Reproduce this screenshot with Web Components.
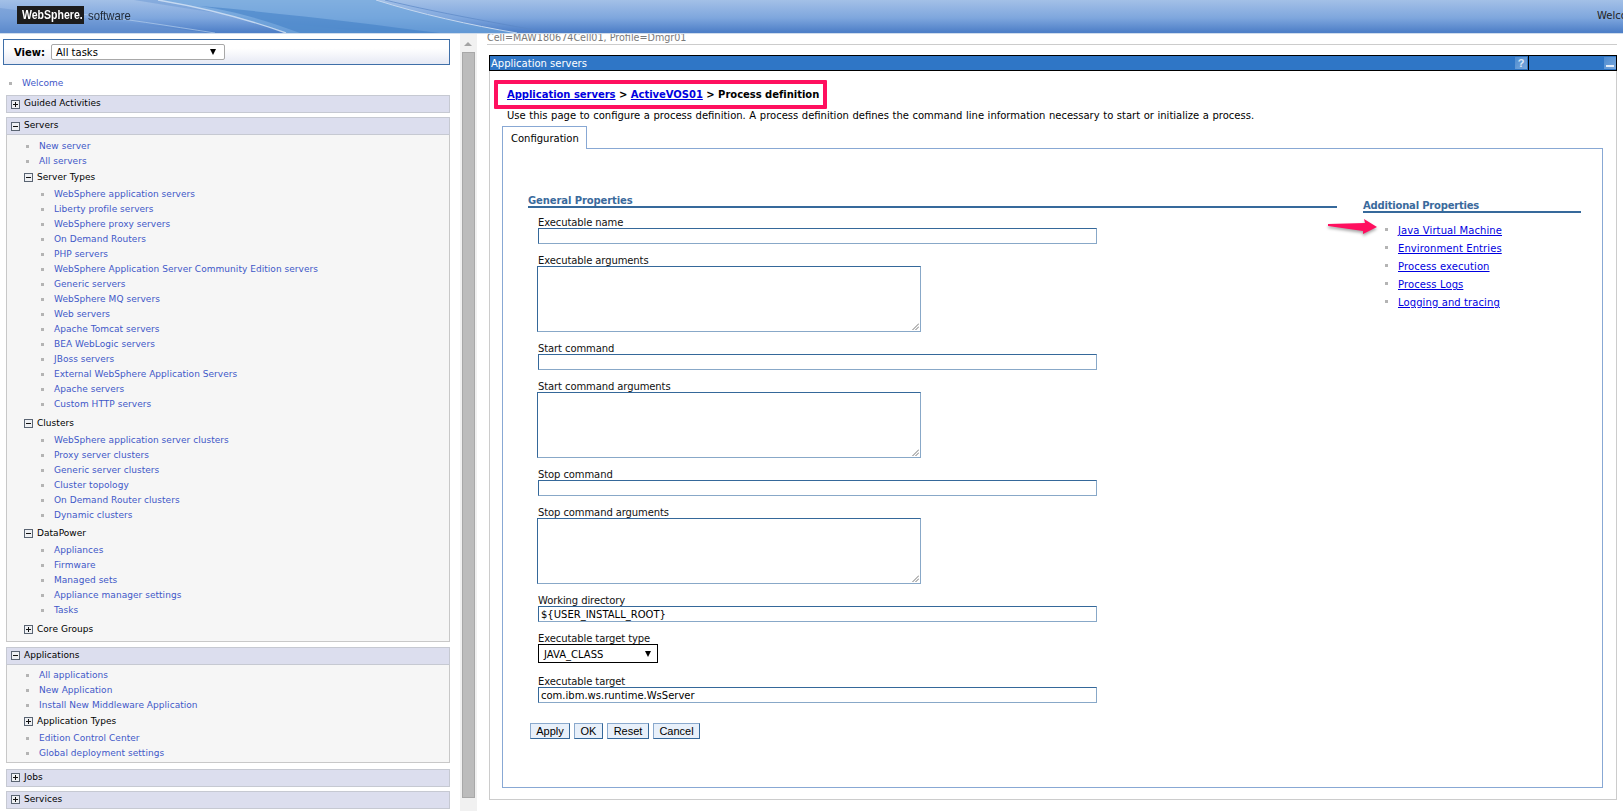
<!DOCTYPE html>
<html>
<head>
<meta charset="utf-8">
<title>WebSphere</title>
<style>
  html, body { margin: 0; height: 100%; overflow: hidden; background: #fff; }
  body { font: 10px "DejaVu Sans", sans-serif; color: #000; }
</style>
</head>
<body>
<was-console>
  <was-header slot="header"></was-header>
  <was-nav slot="nav">
    <nav-link level="0" style="margin-bottom:4px">Welcome</nav-link>
    <nav-section title="Guided Activities"></nav-section>
    <nav-section title="Servers" open pad="4" end="2" gap="5">
      <nav-link>New server</nav-link>
      <nav-link>All servers</nav-link>
      <nav-group title="Server Types" open>
        <nav-link level="2">WebSphere application servers</nav-link>
        <nav-link level="2">Liberty profile servers</nav-link>
        <nav-link level="2">WebSphere proxy servers</nav-link>
        <nav-link level="2">On Demand Routers</nav-link>
        <nav-link level="2">PHP servers</nav-link>
        <nav-link level="2">WebSphere Application Server Community Edition servers</nav-link>
        <nav-link level="2">Generic servers</nav-link>
        <nav-link level="2">WebSphere MQ servers</nav-link>
        <nav-link level="2">Web servers</nav-link>
        <nav-link level="2">Apache Tomcat servers</nav-link>
        <nav-link level="2">BEA WebLogic servers</nav-link>
        <nav-link level="2">JBoss servers</nav-link>
        <nav-link level="2">External WebSphere Application Servers</nav-link>
        <nav-link level="2">Apache servers</nav-link>
        <nav-link level="2">Custom HTTP servers</nav-link>
      </nav-group>
      <nav-group title="Clusters" open>
        <nav-link level="2">WebSphere application server clusters</nav-link>
        <nav-link level="2">Proxy server clusters</nav-link>
        <nav-link level="2">Generic server clusters</nav-link>
        <nav-link level="2">Cluster topology</nav-link>
        <nav-link level="2">On Demand Router clusters</nav-link>
        <nav-link level="2">Dynamic clusters</nav-link>
      </nav-group>
      <nav-group title="DataPower" open>
        <nav-link level="2">Appliances</nav-link>
        <nav-link level="2">Firmware</nav-link>
        <nav-link level="2">Managed sets</nav-link>
        <nav-link level="2">Appliance manager settings</nav-link>
        <nav-link level="2">Tasks</nav-link>
      </nav-group>
      <nav-group title="Core Groups"></nav-group>
    </nav-section>
    <nav-section title="Applications" open pad="3" end="1" gap="6">
      <nav-link>All applications</nav-link>
      <nav-link>New Application</nav-link>
      <nav-link>Install New Middleware Application</nav-link>
      <nav-group title="Application Types"></nav-group>
      <nav-link>Edition Control Center</nav-link>
      <nav-link>Global deployment settings</nav-link>
    </nav-section>
    <nav-section title="Jobs"></nav-section>
    <nav-section title="Services"></nav-section>
  </was-nav>
  <was-scrollbar slot="scroll"></was-scrollbar>
  <was-content slot="content">
    <was-portlet title="Application servers">
      <was-breadcrumb>
        <a>Application servers</a> &gt; <a>ActiveVOS01</a> &gt; Process definition
      </was-breadcrumb>
      <was-description>Use this page to configure a process definition. A process definition defines the command line information necessary to start or initialize a process.</was-description>
      <was-tabs tab="Configuration">
        <was-form-col title="General Properties">
          <form-field label="Executable name" type="text"></form-field>
          <form-field label="Executable arguments" type="area"></form-field>
          <form-field label="Start command" type="text"></form-field>
          <form-field label="Start command arguments" type="area"></form-field>
          <form-field label="Stop command" type="text"></form-field>
          <form-field label="Stop command arguments" type="area"></form-field>
          <form-field label="Working directory" type="text" value="${USER_INSTALL_ROOT}"></form-field>
          <form-field label="Executable target type" type="select" value="JAVA_CLASS"></form-field>
          <form-field label="Executable target" type="text" value="com.ibm.ws.runtime.WsServer"></form-field>
          <form-buttons>
            <button-x w="40">Apply</button-x><button-x w="29">OK</button-x><button-x w="42">Reset</button-x><button-x w="47">Cancel</button-x>
          </form-buttons>
        </was-form-col>
        <was-props slot="side" title="Additional Properties">
          <prop-link>Java Virtual Machine</prop-link>
          <prop-link>Environment Entries</prop-link>
          <prop-link>Process execution</prop-link>
          <prop-link>Process Logs</prop-link>
          <prop-link>Logging and tracing</prop-link>
        </was-props>
      </was-tabs>
    </was-portlet>
  </was-content>
</was-console>

<script>
function define(name, css, html) {
  customElements.define(name, class extends HTMLElement {
    constructor() {
      super();
      this.attachShadow({ mode: "open" });
    }
    connectedCallback() {
      const get = (k, d = "") => this.getAttribute(k) ?? d;
      const body = typeof html === "function" ? html(get, this) : html;
      this.shadowRoot.innerHTML = `<style>${css}</style>${body}`;
    }
  });
}

const toggle = (open) => /*html*/ `
  <svg width="9" height="9" viewBox="0 0 9 9" style="flex:none;display:block">
    <rect x="0.5" y="0.5" width="8" height="8" fill="#eef0f3" stroke="#5a6472"/>
    <path d="M2 4.5h5${open ? "" : "M4.5 2v5"}" stroke="#111" fill="none"/>
  </svg>`;

define("was-console", `
  :host { display: grid; grid-template-columns: 460px 17px 1fr; grid-template-rows: 33px 1fr; height: 811px; overflow: hidden; }
  .h { grid-column: 1 / 4; display: block; position: relative; z-index: 2; }
`, `<div class="h"><slot name="header"></slot></div><slot name="nav"></slot><slot name="scroll"></slot><slot name="content"></slot>`);

define("was-header", `
  :host { display: block; height: 34px; box-sizing: border-box; position: relative; overflow: hidden;
    background: linear-gradient(#a3c0e7, #7ea6dd 55%, #4f80c8 96%); border-bottom: 1px solid #cfdcec; }
  svg { position: absolute; left: 0; top: 0; }
  .bar { position: relative; display: flex; align-items: center; height: 30px; padding-left: 17px; }
  .logo { background: #1c1c1c; height: 18px; width: 67px; box-sizing: border-box; padding-left: 5px; overflow: hidden; flex: none; }
  .logo span { display: inline-block; color: #fff; font: bold 13px/18px "Liberation Sans", sans-serif; white-space: nowrap; transform: scaleX(.81); transform-origin: left; }
  .soft { display: inline-block; font: 13px "Liberation Sans", sans-serif; color: #222c3a; margin-left: 4px; width: 44px; white-space: nowrap; transform: scaleX(.87); transform-origin: left; }
  .welcome { margin-left: auto; color: #222; font-size: 10px; width: 26px; overflow: hidden; white-space: nowrap; }
`, /*html*/ `
  <svg width="1623" height="33" viewBox="0 0 1623 33" fill="none">
    <path d="M0 8C60 16 140 24 210 33H0Z" fill="#6b95d2" opacity=".5"/>
    <path d="M134 0C220 14 300 26 380 33H286C250 20 205 8 158 0Z" fill="#6f9ad6" opacity=".55"/>
    <path d="M158 0H376C420 14 470 25 517 33H286C250 20 205 8 158 0Z" fill="#6fa6db" opacity=".65"/>
    <path d="M200 6C290 14 370 24 440 33H300C270 22 240 12 200 6Z" fill="#3f7dc4" opacity=".55"/>
    <path d="M158 0C205 8 250 20 286 33" stroke="#d2e2f5" stroke-width="1.4" opacity=".85"/>
    <path d="M376 0C420 14 470 25 517 33" stroke="#c6d8ef" stroke-width="1"/>
    <path d="M385 0C430 11 480 20 540 31" stroke="#5b88c6" stroke-width="1" opacity=".7"/>
    <path d="M80 14C120 18 170 26 215 33" stroke="#b4cdeb" stroke-width="1" opacity=".7"/>
  </svg>
  <div class="bar">
    <span class="logo"><span>WebSphere.</span></span><span class="soft">software</span>
    <span class="welcome">Welcome</span>
  </div>`);

define("was-nav", `
  :host { display: block; padding: 6px 0 0 3px; background: #fff; overflow: hidden; }
  .view { box-sizing: border-box; width: 447px; height: 26px; border: 1px solid #3f6fa8; display: flex; align-items: center; padding-left: 10px; background: linear-gradient(#fff 35%, #e6e9f4); margin-bottom: 11px; }
  b { font-size: 10px; margin-right: 6px; }
  .sel { box-sizing: border-box; width: 174px; height: 16px; border: 1px solid #a8a8a8; border-radius: 2px; background: #fff; display: flex; align-items: center; justify-content: space-between; padding: 0 8px 0 4px; }
  .arr { width: 0; height: 0; border: 3.5px solid transparent; border-top: 6px solid #000; border-bottom: 0; }
  .list { padding-left: 3px; font-size: 9px; letter-spacing: .04px; }
`, `<div class="view"><b>View:</b><div class="sel"><span>All tasks</span><i class="arr"></i></div></div><div class="list"><slot></slot></div>`);

define("nav-link", `
  :host { display: block; height: 15px; line-height: 15px; color: #3f58c8; white-space: nowrap; position: relative; }
  :host([level="0"]) { padding-left: 16px; }
  :host(:not([level])) { padding-left: 32px; }
  :host([level="2"]) { padding-left: 47px; }
  i { display: block; position: absolute; top: 6px; width: 3px; height: 3px; background: #b4b4b4; }
  :host([level="0"]) i { left: 3px; }
  :host(:not([level])) i { left: 19px; }
  :host([level="2"]) i { left: 34px; }
`, `<i></i><slot></slot>`);

define("nav-section", `
  :host { display: block; width: 444px; }
  .head { box-sizing: border-box; height: 18px; background: #dcdeee; border: 1px solid #c6c9d2; display: flex; align-items: center; gap: 4px; padding-left: 4px; }
  .head span { padding-bottom: 2px; }
  .body { box-sizing: border-box; background: #f6f6f6; border: 1px solid #c8c8c8; border-top: 0; }
`, (get, el) => `
  <style>:host { padding-bottom: ${get("gap", 4)}px; }</style>
  <div class="head">${toggle(el.hasAttribute("open"))}<span>${get("title")}</span></div>
  ${el.hasAttribute("open") ? `<div class="body" style="padding:${get("pad", 3)}px 0 ${get("end", 2)}px"><slot></slot></div>` : ""}`);

define("nav-group", `
  :host { display: block; }
  :host([open]) { margin-bottom: 2.5px; }
  .head { height: 18px; box-sizing: border-box; padding: 0 0 1px 17px; display: flex; align-items: center; gap: 4px; white-space: nowrap; color: #000; }
  .head span { padding-bottom: 1px; }
`, (get, el) => `<div class="head">${toggle(el.hasAttribute("open"))}<span>${get("title")}</span></div><slot></slot>`);

define("was-scrollbar", `
  :host { display: block; position: relative; background: #f1f1f1; box-sizing: border-box; }
  .up { position: absolute; left: 4px; top: 9px; border: 4px solid transparent; border-top: 0; border-bottom: 4px solid #a3a3a3; }
  .thumb { position: absolute; left: 2px; width: 13px; top: 19px; height: 746px; background: #bcbcbc; border: 1px solid #a8a8a8; box-sizing: border-box; }
`, `<div class="up"></div><div class="thumb"></div>`);

define("was-content", `
  :host { display: block; overflow: hidden; padding: 0 6px 0 10px; }
  .cell { color: #7a7a7a; height: 11px; line-height: 10px; border-bottom: 1px solid #ccc; white-space: nowrap; font-size: 9.6px; margin-bottom: 10px; overflow: hidden; }
`, `<div class="cell">Cell=MAW180674Cell01, Profile=Dmgr01</div><slot></slot>`);

define("was-portlet", `
  :host { display: block; margin-left: 2px; }
  .title { box-sizing: border-box; height: 16px; background: #2f76c6; border: 1px solid #000; color: #fff; display: flex; align-items: center; line-height: 14px; padding-left: 1px; }
  .title span { flex: 1; padding-top: 2px; line-height: 12px; }
  .hlp { width: 12px; height: 12px; background: linear-gradient(135deg, #4d8bd0, #7aa8dc); color: #dfe9f6; font: bold 11px/12px "Liberation Sans", sans-serif; text-align: center; margin-right: 1px; }
  .cell2 { width: 87px; border-left: 1px solid #000; height: 14px; display: flex; justify-content: flex-end; align-items: center; }
  .min { width: 12px; height: 12px; background: linear-gradient(135deg, #4d8bd0, #7aa8dc); position: relative; }
  .min:after { content: ""; position: absolute; left: 2px; right: 2px; bottom: 2px; height: 2px; background: #e6eef8; }
  .body { box-sizing: border-box; height: 729px; border: 1px solid #ccc; border-top: 0; padding: 9px 13px 0 12px; }
`, (get) => `
  <div class="title"><span>${get("title")}</span><i class="hlp" style="font-style:normal">?</i><div class="cell2"><i class="min"></i></div></div>
  <div class="body"><slot></slot></div>`);

define("was-breadcrumb", `
  :host { display: block; position: relative; height: 29px; line-height: 29px; font-weight: bold; margin-left: -8px; letter-spacing: -.03px; }
  .text { padding-left: 13px; white-space: nowrap; }
  .mark { position: absolute; left: 0; top: 0; width: 333px; height: 29px; box-sizing: border-box; border: 4px solid #ff0f5f; border-radius: 1px; }
  ::slotted(a) { color: #0000e0; text-decoration: underline; }
`, `<div class="text"><slot></slot></div><div class="mark"></div>`);

define("was-description", `
  :host { display: block; height: 17px; line-height: 14px; padding-left: 5px; white-space: nowrap; word-spacing: .4px; }
`, `<slot></slot>`);

define("was-tabs", `
  :host { display: block; }
  .tab { box-sizing: border-box; width: 85px; height: 23px; border: 1px solid #88a8d4; border-bottom: 0; background: #fff; line-height: 23px; padding-left: 8px; position: relative; z-index: 1; margin-bottom: -1px; }
  .page { box-sizing: border-box; height: 640px; border: 1px solid #88a8d4; padding: 45px 21px 0 25px; display: flex; }
  .main { flex: 0 0 809px; }
  .side { margin: 5px 0 0 26px; flex: 0 0 218px; }
`, (get) => `
  <div class="tab">${get("tab")}</div>
  <div class="page"><div class="main"><slot></slot></div><div class="side"><slot name="side"></slot></div></div>`);

define("was-form-col", `
  :host { display: block; }
  h3 { margin: 0; font-size: 10px; line-height: 14px; color: #3a6a9c; letter-spacing: -.1px; border-bottom: 2px solid #36699b; height: 12px; }
  .f { padding: 8px 0 0 10px; }
`, (get) => `<h3>${get("title")}</h3><div class="f"><slot></slot></div>`);

define("form-field", `
  :host { display: block; margin-bottom: 10px; }
  label { display: block; line-height: 14px; height: 12px; white-space: nowrap; color: #111; letter-spacing: -.1px; }
  .text, .area { box-sizing: border-box; border: 1px solid #88a8c8; border-top-color: #35689a; border-left-color: #35689a; display: block; }
  .text { width: 559px; height: 16px; line-height: 16px; padding-left: 2px; }
  .area { width: 384px; height: 66px; margin-left: -1px; position: relative; }
  .grip { position: absolute; right: 1px; bottom: 1px; }
  .sel { box-sizing: border-box; width: 120px; height: 19px; border: 1px solid #000; display: flex; align-items: center; justify-content: space-between; padding: 2px 6px 0 5px; margin-bottom: 12px; }
  .arr { border: 3.5px solid transparent; border-top: 6px solid #000; border-bottom: 0; margin-top: -2px; }
`, (get) => {
  const t = get("type"), v = get("value");
  const box = t === "text" ? `<div class="text">${v}</div>`
    : t === "area" ? `<div class="area"><svg class="grip" width="7" height="7"><path d="M0.5 7L7 0.5M3.5 7L7 3.5" stroke="#777"/></svg></div>`
    : `<div class="sel"><span>${v}</span><i class="arr"></i></div>`;
  return `<label>${get("label")}</label>${box}`;
});

define("form-buttons", `
  :host { display: flex; gap: 4px; margin: 20px 0 0 -8px; }
`, `<slot></slot>`);

define("button-x", `
  :host { display: block; box-sizing: border-box; height: 16px; text-align: center; font: 11px/14px "Liberation Sans", sans-serif; background: #e8f0fa; border: 1px solid #8aa9cd; border-right-color: #35689a; border-bottom-color: #35689a; }
`, (get) => `<style>:host { width: ${get("w")}px; }</style><slot></slot>`);

define("was-props", `
  :host { display: block; position: relative; }
  h3 { margin: 0 0 8px; font-size: 10px; line-height: 14px; height: 12px; color: #3a6a9c; letter-spacing: -.2px; border-bottom: 2px solid #36699b; }
  svg { position: absolute; left: -36px; top: 19px; overflow: visible; filter: drop-shadow(0 2px 1.5px rgba(0,0,0,.35)); }
  .l { padding-left: 22px; }
`, (get) => `
  <h3>${get("title")}</h3>
  <svg width="50" height="18" viewBox="0 0 50 18">
    <path d="M1 6L38 5L37 1L50 9L36 16L36 13L1 8Z" fill="#ff0f5f"/>
  </svg>
  <div class="l"><slot></slot></div>`);

define("prop-link", `
  :host { display: block; height: 18px; line-height: 20px; color: #0000e0; text-decoration: underline; position: relative; padding-left: 13px; white-space: nowrap; letter-spacing: .1px; }
  i { position: absolute; left: 0; top: 7px; width: 3px; height: 3px; background: #b4b4b4; }
`, `<i></i><slot></slot>`);
</script>
</body>
</html>
